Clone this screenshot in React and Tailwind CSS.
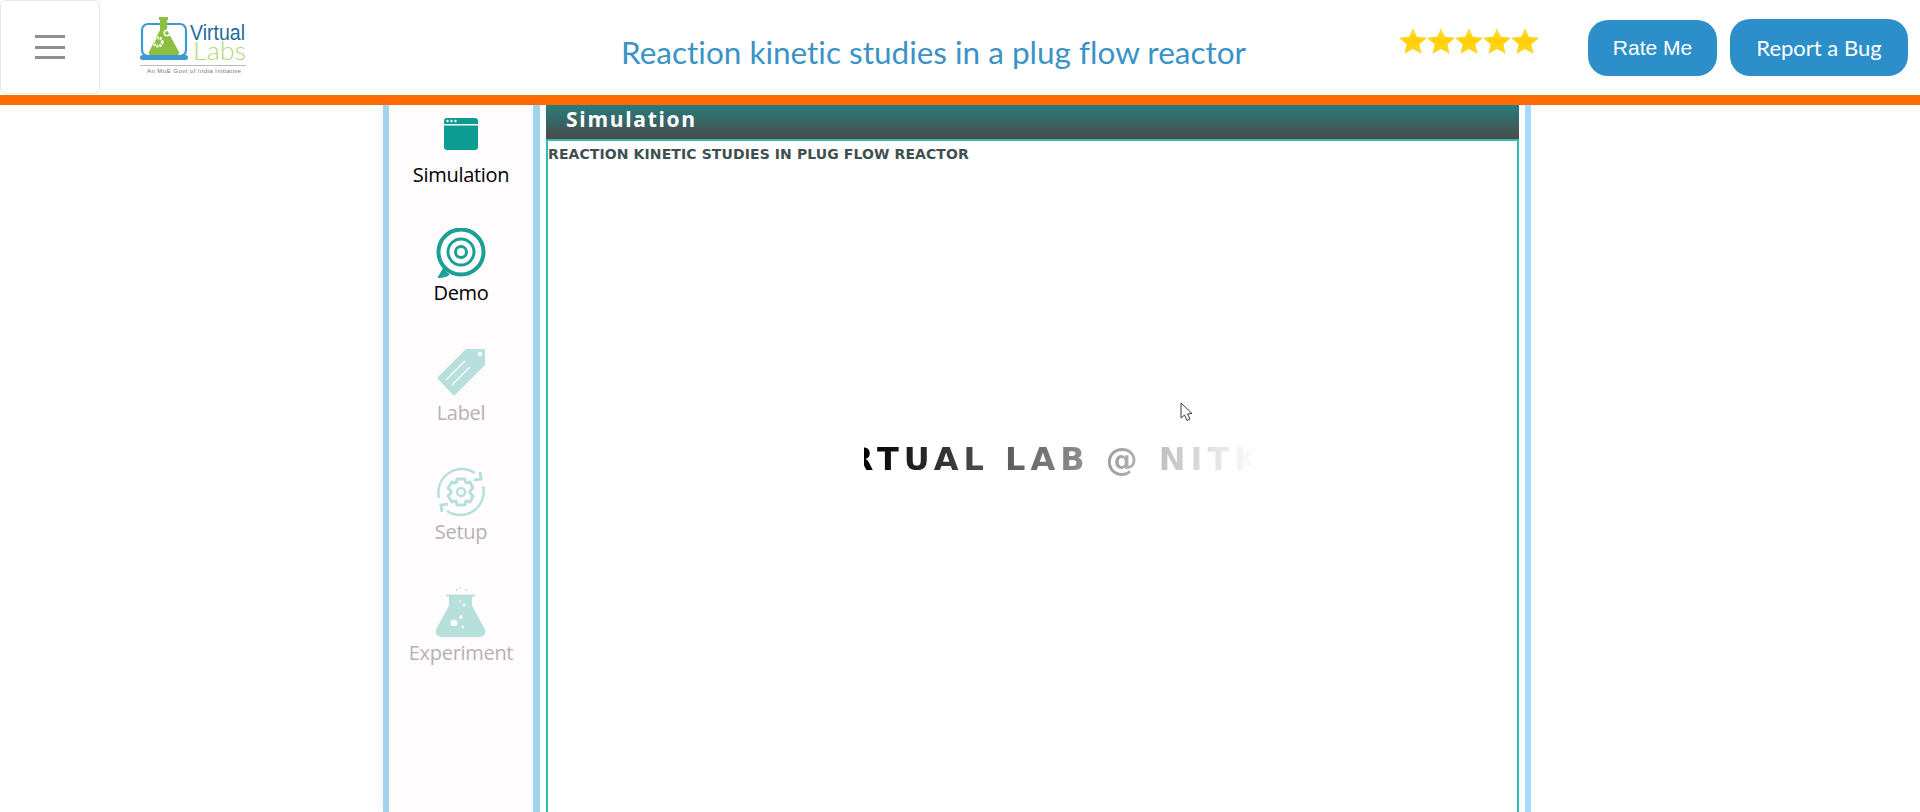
import React from 'react'

const Logo = () => (
  <svg width="110" height="62" viewBox="0 0 110 62" className="block overflow-visible">
    <rect x="2" y="7" width="44" height="32" rx="6" fill="none" stroke="#3d9ad1" strokeWidth="2.2" />
    <rect x="0" y="38" width="48" height="5" rx="2.500" fill="#3d9ad1" />
    <path d="M19 0h9v3h-1v10l12 22q1 3-2 3H11q-3 0-2-3l11-22V3h-1z" fill="#8cbf3f" />
    <circle cx="18" cy="25" r="4.200" fill="none" stroke="#fff" strokeWidth="2.800" strokeDasharray="2 1" />
    <circle cx="27" cy="16" r="2.800" fill="none" stroke="#fff" strokeWidth="1.500" />
    <text x="50" y="23" fontSize="22" fill="#1f6a99" textLength="55" lengthAdjust="spacingAndGlyphs" style={{ fontFamily: '"Liberation Sans", sans-serif' }}>Virtual</text>
    <text x="53" y="43" fontSize="25" fontWeight="300" fill="#b4d67d" textLength="53" lengthAdjust="spacingAndGlyphs" style={{ fontFamily: 'Lato, sans-serif' }}>Labs</text>
    <line x1="0" y1="48.500" x2="106" y2="48.500" stroke="#aaaaaa" strokeWidth="0.800" />
    <text x="7" y="56" fontSize="6.200" fill="#777777" textLength="94" style={{ fontFamily: '"Liberation Sans", sans-serif' }}>An MoE Govt of India Initiative</text>
  </svg>
)

const Star = () => (
  <svg width="28" height="26" viewBox="0 0 29 28" preserveAspectRatio="none" className="shrink-0">
    <defs>
      <linearGradient id="gold" x1="0" y1="0" x2="0" y2="1">
        <stop offset="0" stopColor="#ffe14a" />
        <stop offset="0.5" stopColor="#ffcf00" />
        <stop offset="1" stopColor="#ffd92e" />
      </linearGradient>
    </defs>
    <polygon points="14.500,0 18.500,9.500 29,10.500 21,17.500 23.500,28 14.500,22.500 5.500,28 8,17.500 0,10.500 10.500,9.500" fill="url(#gold)" />
  </svg>
)

const SimulationIcon = () => (
  <svg width="34" height="32" viewBox="0 0 34 32">
    <path d="M3 0h28a3 3 0 0 1 3 3v3H0V3a3 3 0 0 1 3-3z" fill="#0c9c92" />
    <path d="M0 7.500h34V29a3 3 0 0 1-3 3H3a3 3 0 0 1-3-3z" fill="#0c9c92" />
    <circle cx="3.500" cy="3" r="1.200" fill="#fff" />
    <circle cx="7.500" cy="3" r="1.200" fill="#fff" />
    <circle cx="11.500" cy="3" r="1.200" fill="#fff" />
  </svg>
)

const DemoIcon = () => (
  <svg width="50" height="50" viewBox="0 0 50 50" fill="none" stroke="#1b9e96">
    <circle cx="25" cy="24" r="22.500" strokeWidth="4" />
    <path d="M2 49l5-9 6 6z" fill="#1b9e96" stroke="none" />
    <path d="M2 49q7 0 11-3" strokeWidth="2" />
    <circle cx="25" cy="24" r="13" strokeWidth="3" />
    <circle cx="25" cy="24" r="5.500" strokeWidth="3" />
  </svg>
)

const LabelIcon = () => (
  <svg width="48" height="49" viewBox="0 0 48 49">
    <polygon points="29,1 48,1 48,17 17,48 0,30" fill="#b7e0dd" />
    <circle cx="43" cy="6" r="2.800" fill="#fffcfd" stroke="#b7e0dd" />
    <path d="M9 32L28 13M15 37L33 19" stroke="#fffcfd" strokeWidth="1.200" />
  </svg>
)

const SetupIcon = () => (
  <svg width="50" height="50" viewBox="0 0 50 50" fill="none" stroke="#b7e0dd" strokeWidth="2.500">
    <path d="M3 31A23.500 23.500 0 0 1 39 6" />
    <path d="M47 19A23.500 23.500 0 0 1 11 44" />
    <path d="M38 13l7-1-1-7" strokeWidth="3" />
    <path d="M12 37l-7 1 1 7" strokeWidth="3" />
    <path d="M21 12h8l1 4 4-1 3 6-3 3v2l3 3-3 6-4-1-1 4h-8l-1-4-4 1-4-6 3-3v-2l-3-3 4-6 4 1z" strokeWidth="3" strokeLinejoin="round" />
    <circle cx="25" cy="25" r="4" strokeWidth="2.500" />
  </svg>
)

const FlaskIcon = () => (
  <svg width="50" height="50" viewBox="0 0 50 50">
    <path d="M10 7.500h29v2h-3v9l13 24q1.500 6.500-5 7.500H5q-6.500-1-5-7.500l13-24v-9h-3z" fill="#b7e0dd" />
    <circle cx="18" cy="36" r="3.300" fill="#fffcfd" />
    <circle cx="25" cy="30" r="1.700" fill="#fffcfd" />
    <circle cx="27" cy="40" r="1.200" fill="#fffcfd" />
    <circle cx="28" cy="18" r="1.300" fill="#fffcfd" />
    <circle cx="24" cy="14" r="0.900" fill="#fffcfd" />
    <circle cx="21" cy="3" r="1" fill="#b7e0dd" />
    <circle cx="24" cy="1" r="0.800" fill="#b7e0dd" />
    <circle cx="30" cy="3" r="1" fill="#b7e0dd" />
  </svg>
)

const sideItems = [
  { name: 'Simulation', icon: <SimulationIcon />, active: true, box: 'h-[32px] mt-[13px]', gap: 'mt-[13px]', end: 'mb-[41px]' },
  { name: 'Demo', icon: <DemoIcon />, active: true, box: 'h-[50px]', gap: 'mt-[3px]', end: 'mb-[43px]' },
  { name: 'Label', icon: <LabelIcon />, active: false, box: 'h-[49px]', gap: 'mt-[4px]', end: 'mb-[42px]' },
  { name: 'Setup', icon: <SetupIcon />, active: false, box: 'h-[50px]', gap: 'mt-[3px]', end: 'mb-[43px]' },
  { name: 'Experiment', icon: <FlaskIcon />, active: false, box: 'h-[50px]', gap: 'mt-[4px]', end: '' },
]

const App = () => {
  return (
    <div className="h-[812px] overflow-hidden bg-white flex flex-col font-['Lato',sans-serif]">
      {/* top bar */}
      <header className="h-[95px] shrink-0 flex items-start">
        <button className="w-[100px] h-[94px] shrink-0 border border-[#e6e6e6] rounded-md flex flex-col items-center justify-center gap-[7.500px]">
          <span className="block w-[30px] h-[3px] bg-[#8e8e8e]"></span>
          <span className="block w-[30px] h-[3px] bg-[#8e8e8e]"></span>
          <span className="block w-[30px] h-[3px] bg-[#8e8e8e]"></span>
        </button>
        <div className="ml-[40px] mt-[17px] w-[110px] shrink-0">
          <Logo />
        </div>
        <h1 className="ml-[371px] mt-[32px] w-[640px] shrink-0 text-[31.500px] leading-[40px] text-[#3a93c6] whitespace-nowrap [font-variant-ligatures:none]">
          Reaction kinetic studies in a plug flow reactor
        </h1>
        <div className="ml-[138px] mt-[28px] w-[189px] shrink-0 flex">
          <Star /><Star /><Star /><Star /><Star />
        </div>
        <button className="mt-[20px] w-[129px] h-[56px] shrink-0 rounded-[20px] bg-[#2c8fca] text-white text-[21px] font-['Liberation_Sans',sans-serif]">
          Rate Me
        </button>
        <button className="ml-[13px] mt-[19px] w-[178px] h-[57px] shrink-0 rounded-[20px] bg-[#2c8fca] text-white text-[22px]">
          Report a Bug
        </button>
      </header>
      <div className="h-[10px] shrink-0 bg-[#ff6a00]"></div>

      {/* page body */}
      <div className="flex-1 min-h-0 ml-[383px] w-[1148px] flex">
        <aside className="w-[157px] shrink-0 bg-[#fffcfd] border-l-[6px] border-r-[7px] border-[#a1d3eb] shadow-[-4px_0_8px_rgba(0,0,0,0.04)] flex flex-col items-center">
          {sideItems.map((item) => (
            <div key={item.name} className={`flex flex-col items-center ${item.end}`}>
              <div className={`flex items-center justify-center ${item.box}`}>
                {item.icon}
              </div>
              <span className={`${item.gap} text-[20px] leading-[24px] font-['Open_Sans',sans-serif] tracking-[-0.3px] ${item.active ? 'text-black' : 'text-[#b6b1b4]'}`}>
                {item.name}
              </span>
            </div>
          ))}
        </aside>

        <main className="ml-[6px] w-[973px] shrink-0 flex flex-col">
          <div className="h-[34px] shrink-0 pl-[20px] pb-[4px] flex items-center bg-[linear-gradient(#267d7d,#4b4b4b)] text-white text-[21px] font-bold tracking-[1.700px] font-['Open_Sans',sans-serif]">
            Simulation
          </div>
          <div className="relative flex-1 border-2 border-b-0 border-[#2dbdb5] bg-white">
            <p className="pl-0 pt-[5px] text-[14px] leading-[16px] font-bold tracking-[0.1px] text-[#3f4f4f] whitespace-nowrap font-['DejaVu_Sans',sans-serif]">
              REACTION KINETIC STUDIES IN PLUG FLOW REACTOR
            </p>
            <div className="mt-[275px] ml-[316px] w-[398px] h-[44px] leading-[44px] overflow-hidden whitespace-nowrap indent-[-62px] text-[32px] font-bold tracking-[5px] text-transparent bg-clip-text bg-[linear-gradient(90deg,#000000,#ffffff_99%)] font-['DejaVu_Sans',sans-serif]">
              VIRTUAL LAB @ NITK
            </div>
            <svg width="13" height="20" viewBox="0 0 13 20" className="absolute left-[632px] top-[261px]">
              <path d="M1 1v15l3.500-3 2.500 5.500 3-1.500-2.500-5 4.500-.5z" fill="#fff" stroke="#3a3a55" strokeWidth="1" />
            </svg>
          </div>
        </main>

        <div className="ml-[6px] w-[6px] shrink-0 bg-[#a8dcff]"></div>
      </div>
    </div>
  )
}

export default App
